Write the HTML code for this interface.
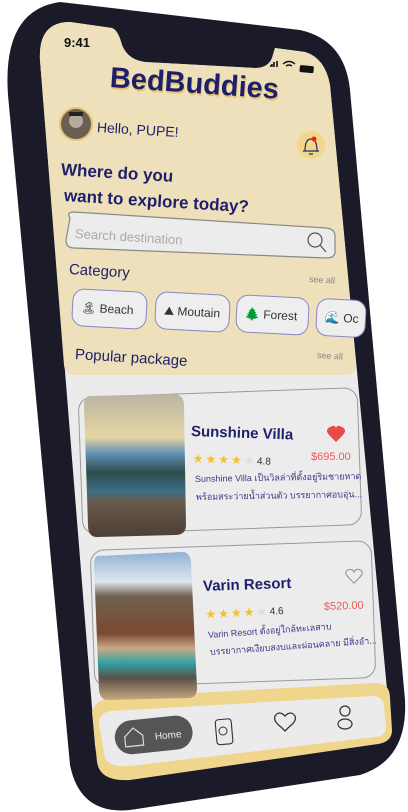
<!DOCTYPE html>
<html><head><meta charset="utf-8"><style>
*{margin:0;padding:0;box-sizing:border-box}
body{width:408px;height:812px;background:#fff;position:relative;overflow:hidden;font-family:"Liberation Sans","Noto Sans CJK SC",sans-serif}
.a{position:absolute;transform:rotate(3.5deg);transform-origin:left center;white-space:nowrap}
.nv{color:#1e1f6b;font-weight:bold}
.chip{position:absolute;height:38px;border:1.5px solid #8a86c9;border-radius:12px;background:#eeeeee;transform:rotate(3deg);font-size:12px;color:#333;display:flex;align-items:center;padding-left:8px;gap:6px}
.card{position:absolute;border:1.2px solid #999;border-radius:14px;background:#ececec;transform:rotate(-2deg)}
.th{font-size:9px;color:#3a3a8a}
</style></head><body>
<svg width="408" height="812" style="position:absolute;left:0;top:0">
<defs>
<linearGradient id="g1" x1="0" y1="0" x2="0" y2="1"><stop offset="0" stop-color="#b9b4a4"/><stop offset=".3" stop-color="#e6d6a4"/><stop offset=".42" stop-color="#5e8fb5"/><stop offset=".55" stop-color="#2f4c4c"/><stop offset=".68" stop-color="#3d6f86"/><stop offset=".75" stop-color="#6a5a4c"/><stop offset="1" stop-color="#4c3f36"/></linearGradient>
<linearGradient id="g2" x1="0" y1="0" x2="0" y2="1"><stop offset="0" stop-color="#8fb2d6"/><stop offset=".2" stop-color="#dfe6ee"/><stop offset=".3" stop-color="#6f6050"/><stop offset=".55" stop-color="#7a4a32"/><stop offset=".65" stop-color="#c9a882"/><stop offset=".75" stop-color="#2fa3a6"/><stop offset=".85" stop-color="#5a5048"/><stop offset="1" stop-color="#c9a882"/></linearGradient>
</defs>
<path d="M60,2 L300,30 Q345,40 350,90 L405,700 Q408,760 360,775 L130,810 Q80,815 70,765 L8,95 Q2,10 60,2 Z" fill="#1a1a28"/>
<path d="M70,22 L112,28 Q118,30 122,45 Q128,60 145,62 L255,68 Q268,68 272,58 L275,48 L305,52 Q325,58 330,85 L388,700 Q392,735 365,740 L130,772 Q98,776 95,745 L40,60 Q38,22 70,22 Z" fill="#ebebeb"/>
<path d="M70,22 L112,28 Q118,30 122,45 Q128,60 145,62 L255,68 Q268,68 272,58 L275,48 L305,52 Q325,58 330,85 L356,365 Q356,375 345,375 L75,375 Q65,375 64,365 L40,60 Q38,22 70,22 Z" fill="#ede0ba"/>
<path d="M92,712 Q95,700 110,698 L375,683 Q390,683 390,698 L392,730 Q392,742 378,744 L130,780 Q100,782 97,762 Z" fill="#f0d58c"/>
<path d="M99,722 Q100,712 112,711 L372,696 Q384,696 384,707 L386,727 Q386,736 375,737 L130,766 Q106,768 104,754 Z" fill="#ebebeb"/>
<text x="64" y="47" font-size="13" font-family="Liberation Sans" font-weight="bold" fill="#111">9:41</text>
<rect x="300" y="65" width="14" height="7" rx="1.5" fill="#111" transform="rotate(5 300 65)"/>
<path d="M270,66 l2,0 l0,-2 M274,67 l0,-5 M277,67 l0,-6" stroke="#111" stroke-width="1.6"/>
<path d="M283,64 q6,-5 12,0 M286,66 q3,-2 6,0" stroke="#111" fill="none" stroke-width="1.4"/>
<circle cx="76" cy="124" r="16" fill="#6b5f55" stroke="#e8c470" stroke-width="2"/>
<circle cx="76" cy="121" r="7" fill="#b5aa9c"/><rect x="69" y="112" width="14" height="4" fill="#222"/>
<circle cx="311" cy="145" r="14" fill="#f2d68a"/>
<path d="M305,151 q0,-12 6,-12 q6,0 6,12 z M303,151 h16 M309,154 h4" stroke="#222a6e" fill="none" stroke-width="1.2"/>
<circle cx="314" cy="139" r="2.5" fill="#e22"/>
<path d="M70,218 Q66,212 74,212 L326,228 Q335,229 335,236 L335,252 Q335,258 326,258 L74,248 Q66,248 66,240 Z" fill="#ececec" stroke="#888" stroke-width="1.2"/>
<circle cx="315" cy="240" r="7" fill="none" stroke="#555" stroke-width="1.2"/><path d="M320,245 l6,7" stroke="#555" stroke-width="1.3"/>
</svg>
<div class="a nv" style="left:110px;top:62px;font-size:29px;text-shadow:1px 2px 0 #e6c36a;transform:rotate(4deg)">BedBuddies</div>
<div class="a" style="left:97px;top:119px;font-size:14px;color:#1e1f6b">Hello, PUPE!</div>
<div class="a nv" style="left:61px;top:160px;font-size:17px">Where do you</div>
<div class="a nv" style="left:64px;top:186px;font-size:17px">want to explore today?</div>
<div class="a" style="left:75px;top:226px;font-size:13px;color:#aaa">Search destination</div>
<div class="a" style="left:69px;top:261px;font-size:15px;color:#1e1f6b">Category</div>
<div class="a" style="left:309px;top:274px;font-size:9px;color:#888">see all</div>
<div class="chip" style="left:72px;top:290px;width:75px">🏝 Beach</div>
<div class="chip" style="left:155px;top:293px;width:75px">⛰ Moutain</div>
<div class="chip" style="left:236px;top:296px;width:73px">🌲 Forest</div>
<div class="chip" style="left:316px;top:299px;width:50px">🌊 Oc</div>
<div class="a" style="left:75px;top:346px;font-size:15px;color:#1e1f6b">Popular package</div>
<div class="a" style="left:317px;top:350px;font-size:9px;color:#888">see all</div>
<div class="card" style="left:80px;top:392px;width:280px;height:138px"></div>
<div class="card" style="left:92px;top:545px;width:282px;height:138px"></div>
<svg width="408" height="812" style="position:absolute;left:0;top:0">
<path d="M90,396 L172,394 Q184,394 184,405 L186,525 Q186,535 175,535 L97,537 Q88,537 88,525 L84,405 Q84,396 90,396 Z" fill="url(#g1)"/>
<path d="M98,556 L182,552 Q190,552 191,562 L197,688 Q197,698 188,698 L108,700 Q100,700 99,690 L94,565 Q94,556 98,556 Z" fill="url(#g2)"/>
<path d="M336,436 q-6,-6 0,-9 q6,-3 6,2 q0,-5 6,-2 q6,3 0,9 l-6,6 z" fill="#e94b4b" transform="translate(-6,0)"/>
<path d="M349,578 q-6,-6 -1,-8 q4,-2 6,2 q2,-4 6,-2 q5,2 -1,8 l-5,5 z" fill="none" stroke="#999" stroke-width="1.2"/>
<text x="193" y="462" font-size="10" fill="#f2c12e" transform="rotate(2 193 462)">★ ★ ★ ★ <tspan fill="#ddd">★</tspan> <tspan fill="#333">4.8</tspan></text>
<text x="206" y="618" font-size="10" fill="#f2c12e" transform="rotate(-3 206 618)">★ ★ ★ ★ <tspan fill="#ddd">★</tspan> <tspan fill="#333">4.6</tspan></text>
<text x="311" y="460" font-size="11" fill="#e95b5b">$695.00</text>
<text x="324" y="610" font-size="11" fill="#e95b5b" transform="rotate(-2 324 610)">$520.00</text>
<g transform="rotate(-6 115 740)"><rect x="115" y="722" width="78" height="34" rx="17" fill="#555"/>
<path d="M125,748 v-10 l9,-8 l9,8 v10 z" fill="none" stroke="#ddd" stroke-width="1.2"/>
<text x="155" y="744" font-size="10" fill="#eee">Home</text></g>
<rect x="215" y="720" width="16" height="25" rx="3" fill="none" stroke="#333" stroke-width="1.1" transform="rotate(-5 215 720)"/>
<circle cx="223" cy="731" r="4" fill="none" stroke="#333"/>
<path d="M285,727 q-8,-6 -6,-11 q4,-6 10,0 q6,-6 10,0 q2,5 -6,11 l-4,4 z" fill="none" stroke="#333" stroke-width="1.3" transform="translate(-4,0)"/>
<circle cx="345" cy="711" r="5" fill="none" stroke="#333" stroke-width="1.2"/>
<ellipse cx="345" cy="724" rx="7" ry="5" fill="none" stroke="#333" stroke-width="1.2"/>
</svg>
<div class="a nv" style="left:191px;top:423px;font-size:15px;transform:rotate(2deg)">Sunshine Villa</div>
<div class="a th" style="left:195px;top:472px;transform:rotate(-1deg)">Sunshine Villa เป็นวิลล่าที่ตั้งอยู่ริมชายหาด</div>
<div class="a th" style="left:196px;top:490px;transform:rotate(-1deg)">พร้อมสระว่ายน้ำส่วนตัว บรรยากาศอบอุ่น...</div>
<div class="a nv" style="left:203px;top:578px;font-size:15px;transform:rotate(-2deg)">Varin Resort</div>
<div class="a th" style="left:208px;top:628px;transform:rotate(-4deg)">Varin Resort ตั้งอยู่ใกล้ทะเลสาบ</div>
<div class="a th" style="left:210px;top:645px;transform:rotate(-4deg)">บรรยากาศเงียบสงบและผ่อนคลาย มีสิ่งอำ...</div>
</body></html>
